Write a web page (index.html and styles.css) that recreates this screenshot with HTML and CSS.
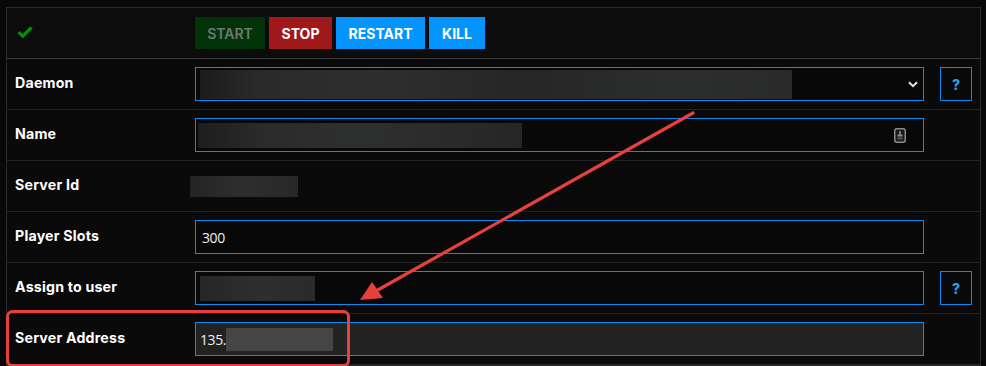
FILE: index.html
```html
<!DOCTYPE html>
<html>
<head>
<meta charset="utf-8">
<link rel="stylesheet" href="styles.css">
</head>
<body>
<div class="panel">
  <div class="row row-top">
    <div class="label"><svg class="check" viewBox="0 0 16 12" width="16" height="12"><path d="M1.5 6.2 L5.8 10.2 L14.5 1.5" fill="none" stroke="#0a8a12" stroke-width="3.2"/></svg></div>
    <div class="field">
      <div class="btns">
        <button class="btn btn-start">START</button>
        <button class="btn btn-stop">STOP</button>
        <button class="btn btn-blue">RESTART</button>
        <button class="btn btn-blue">KILL</button>
      </div>
    </div>
    <div class="aux"></div>
  </div>
  <div class="row">
    <div class="label">Daemon</div>
    <div class="field">
      <div class="input select">
        <div class="blur blur-daemon"></div>
        <svg class="chev" viewBox="0 0 10 7" width="10" height="7"><path d="M1 1.2 L5 5.2 L9 1.2" fill="none" stroke="#e6e6e6" stroke-width="2"/></svg>
      </div>
    </div>
    <div class="aux"><div class="help">?</div></div>
  </div>
  <div class="row">
    <div class="label">Name</div>
    <div class="field">
      <div class="input">
        <div class="blur blur-name"></div>
        <svg class="pm" viewBox="0 0 12 15" width="12" height="15"><rect x="0.75" y="0.75" width="10.5" height="13.5" rx="2" fill="#1a1a1a" stroke="#8a8a8a" stroke-width="1.5"/><rect x="5.2" y="3" width="1.6" height="4" fill="#8a8a8a"/><rect x="3.5" y="6.5" width="5" height="2" fill="#8a8a8a"/><rect x="3.5" y="9.3" width="5" height="2.2" fill="#555"/></svg>
      </div>
    </div>
    <div class="aux"></div>
  </div>
  <div class="row">
    <div class="label">Server Id</div>
    <div class="field plain"><div class="blur blur-id"></div></div>
    <div class="aux"></div>
  </div>
  <div class="row">
    <div class="label">Player Slots</div>
    <div class="field"><div class="input"><span class="val">300</span></div></div>
    <div class="aux"></div>
  </div>
  <div class="row">
    <div class="label">Assign to user</div>
    <div class="field"><div class="input"><div class="blur blur-user"></div></div></div>
    <div class="aux"><div class="help">?</div></div>
  </div>
  <div class="row">
    <div class="label">Server Address</div>
    <div class="field"><div class="input readonly"><span class="val">135.</span><div class="blur blur-addr"></div></div></div>
    <div class="aux"></div>
  </div>
</div>
<svg class="annot" width="986" height="366" viewBox="0 0 986 366">
  <line x1="693" y1="113" x2="376" y2="291" stroke="#e8403e" stroke-width="3.2" stroke-linecap="round"/>
  <polygon points="360,300 372,282 383,298" fill="#e8403e"/>
  <rect x="7.5" y="311.5" width="341" height="54" rx="5" fill="none" stroke="#e8403e" stroke-width="3"/>
</svg>
</body>
</html>
```
FILE: styles.css
```css
* { box-sizing: border-box; }
html, body { margin: 0; padding: 0; }
body {
  background: #080808;
  width: 986px;
  height: 366px;
  overflow: hidden;
  position: relative;
  font-family: "Inter", "Noto Sans", sans-serif;
  color: #fff;
}
.panel {
  margin: 7px 0 0 6px;
  width: 975px;
  border: 1px solid #2a2a2a;
  border-right-color: #2c2c2c;
  background: #0a0a0a;
}
.row {
  display: grid;
  grid-template-columns: 188px 729px 16px 32px 8px;
  height: 51px;
  border-bottom: 1px solid #232323;
  align-items: center;
}
.row > .aux { grid-column: 4; }
.row-top { background: #0c0c0c; border-bottom-color: #3a3a3a; }
.label {
  padding-left: 8px;
  padding-bottom: 4px;
  font-weight: 700;
  font-size: 14.2px;
  letter-spacing: 0.2px;
  color: #fff;
}
.row-top .label { padding-bottom: 2px; }
.check { display: block; margin-left: 2px; }
.btns { display: flex; gap: 4px; }
.btn {
  height: 32px;
  border: 0;
  font-family: "Inter", sans-serif;
  font-weight: 700;
  font-size: 14px;
  padding: 0 12px;
  color: #fff;
  cursor: pointer;
}
.btn-start { background: #033309; color: #6f7a70; font-weight: 600; width: 70px; }
.btn-stop { background: #a0191a; width: 63px; }
.btn-blue { background: #0394ff; }
.btn-blue:nth-child(3) { width: 89px; }
.btn-blue:nth-child(4) { width: 56px; }
.input {
  height: 34px;
  border: 1px solid #0a8cf0;
  background: #080808;
  display: flex;
  align-items: center;
  position: relative;
  padding-left: 3px;
}
.input.readonly { background: #222; padding-left: 4px; }
.val {
  font-family: "Open Sans", "Inter", sans-serif;
  font-size: 14px;
  letter-spacing: -0.4px;
  color: #f0f0f0;
  padding-left: 3px;
}
.input.readonly .val { padding-left: 0; }
.blur { height: 26px; }
.blur-daemon {
  width: 592px; height: 29px; margin-left: 1px;
  background: linear-gradient(90deg, #1c1c1c 0%, #2a2a2a 10%, #2e2e2e 30%, #262626 55%, #2c2e2e 80%, #2a2a2a 100%);
}
.blur-name {
  width: 324px; height: 25px; margin-left: -1px;
  background: linear-gradient(90deg, #1e1e1e 0%, #2b2b2b 20%, #2e2f2f 50%, #2a2a2a 80%, #262626 100%);
}
.blur-id {
  width: 108px; height: 21px; margin-left: -5px;
  background: linear-gradient(90deg, #242424 0%, #2e2e2e 50%, #282828 100%);
}
.blur-user {
  width: 115px; height: 25px; margin-left: 1px;
  background: linear-gradient(90deg, #262626 0%, #2e2e2e 50%, #2a2a2a 100%);
}
.blur-addr {
  width: 107px; height: 23px;
  background: #454545;
}
.chev { position: absolute; right: 5px; top: 13px; }
.pm { position: absolute; right: 17px; top: 9px; }
.help {
  width: 32px; height: 34px;
  border: 1px solid #0a8cf0;
  color: #2aa0e8;
  font-weight: 800;
  font-size: 14px;
  display: flex; align-items: center; justify-content: center;
}
.annot { position: absolute; left: 0; top: 0; pointer-events: none; }
```
